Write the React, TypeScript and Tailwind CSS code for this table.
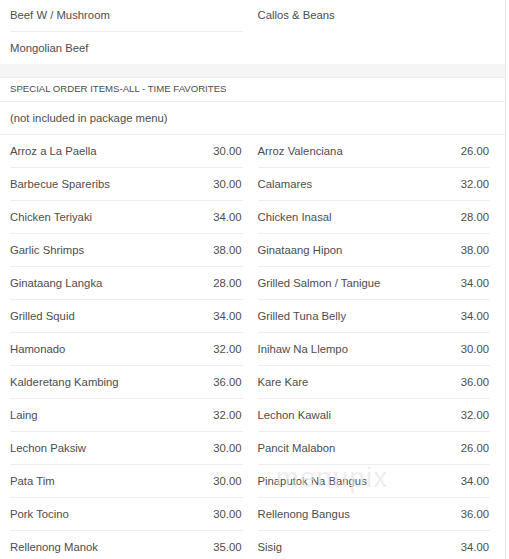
import React from 'react';

const topItems = ['Beef W / Mushroom', 'Callos & Beans', 'Mongolian Beef'];

const specials: [string, string][] = [
  ['Arroz a La Paella', '30.00'],
  ['Arroz Valenciana', '26.00'],
  ['Barbecue Spareribs', '30.00'],
  ['Calamares', '32.00'],
  ['Chicken Teriyaki', '34.00'],
  ['Chicken Inasal', '28.00'],
  ['Garlic Shrimps', '38.00'],
  ['Ginataang Hipon', '38.00'],
  ['Ginataang Langka', '28.00'],
  ['Grilled Salmon / Tanigue', '34.00'],
  ['Grilled Squid', '34.00'],
  ['Grilled Tuna Belly', '34.00'],
  ['Hamonado', '32.00'],
  ['Inihaw Na Llempo', '30.00'],
  ['Kalderetang Kambing', '36.00'],
  ['Kare Kare', '36.00'],
  ['Laing', '32.00'],
  ['Lechon Kawali', '32.00'],
  ['Lechon Paksiw', '30.00'],
  ['Pancit Malabon', '26.00'],
  ['Pata Tim', '30.00'],
  ['Pinaputok Na Bangus', '34.00'],
  ['Pork Tocino', '30.00'],
  ['Rellenong Bangus', '36.00'],
  ['Rellenong Manok', '35.00'],
  ['Sisig', '34.00'],
];

export default function App() {
  return (
    <div className="relative h-[559px] w-[509px] overflow-hidden bg-white [font-family:'Liberation_Sans',Arial,sans-serif] text-[11.3px] text-[#4d4d4d]">
      <div className="w-[506px] border-r border-[#e6e6e6] -mt-px">
        {/* package items */}
        <div className="grid grid-cols-2 gap-x-[15px] pl-[10px] pr-[15px]">
          {topItems.map((name, i) => (
            <div
              key={name}
              className={`flex items-center ${i === 0 ? 'h-[33px] border-b border-[#eeeeee]' : i === 1 ? 'h-[33px]' : 'h-[32px]'}`}
            >
              {name}
            </div>
          ))}
        </div>

        <div className="h-[13px] bg-[#f5f5f5]" />

        <div className="border-t border-[#ececec]">
          <div className="flex h-[24px] items-center border-b border-[#ececec] pl-[10px] text-[9.6px] uppercase">
            Special Order Items-All - Time Favorites
          </div>
          <div className="flex h-[33px] items-center border-b border-[#ececec] pl-[10px]">
            (not included in package menu)
          </div>
        </div>

        <div className="grid grid-cols-2 gap-x-[15px] pl-[10px] pr-[15px]">
          {specials.map(([name, price]) => (
            <div
              key={name}
              className="flex h-[33px] items-center justify-between border-b border-[#eeeeee] pr-px"
            >
              <span>{name}</span>
              <span>{price}</span>
            </div>
          ))}
        </div>
      </div>

      <div className="pointer-events-none absolute left-[276px] top-[458px] select-none text-[27px] tracking-[1.5px] text-[#e6e6e6]/70">
        menupix
      </div>
    </div>
  );
}
